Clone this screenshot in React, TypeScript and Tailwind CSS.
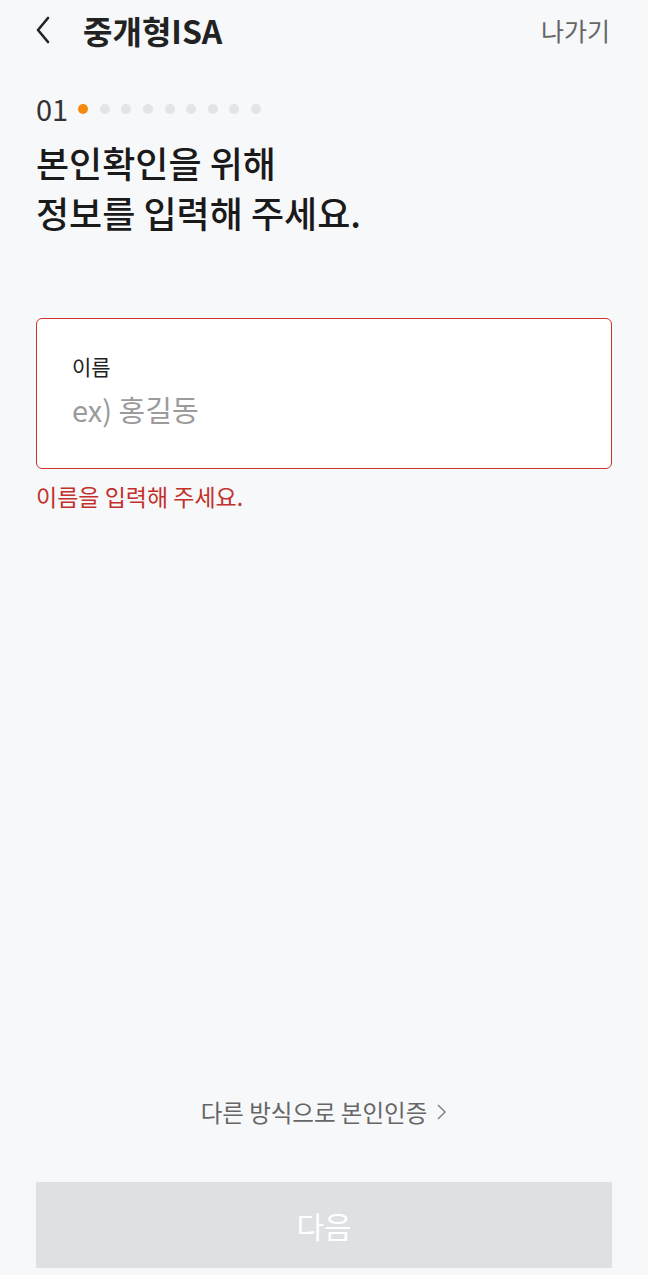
import React from 'react';

const FONT = { fontFamily: '"Noto Sans CJK KR", "Noto Sans", sans-serif' };

export default function App() {
  const dots = Array.from({ length: 9 });
  return (
    <div style={FONT} className="flex h-[1275px] w-[648px] flex-col bg-[#f7f8fa] text-[#222]">
      {/* header */}
      <div className="flex h-[60px] items-center pl-[34px] pr-[38px]">
        <svg width="18" height="30" viewBox="0 0 18 30" className="mr-[31px]">
          <path d="M14 3 L4 15 L14 27" fill="none" stroke="#222" strokeWidth="2.6" strokeLinecap="round" strokeLinejoin="round" />
        </svg>
        <h1 className="text-[32px] font-bold leading-none text-[#222]">중개형ISA</h1>
        <span className="ml-auto text-[25px] leading-none text-[#666]">나가기</span>
      </div>

      <div className="px-9">
        {/* step */}
        <div className="mt-[33px] flex h-[30px] items-center">
          <span className="text-[29px] leading-none text-[#333]">01</span>
          <div className="ml-[10px] mt-[2px] flex items-center gap-[11.6px]">
            {dots.map((_, i) => (
              <span key={i} className={`h-[10px] w-[10px] rounded-full ${i === 0 ? 'bg-[#f5890d]' : 'bg-[#e2e4e7]'}`} />
            ))}
          </div>
        </div>
        <h2 className="mt-[14px] text-[36px] font-medium leading-[50px] text-[#1a1a1a]">
          본인확인을 위해
          <br />
          정보를 입력해 주세요.
        </h2>

        {/* input */}
        <div className="mt-[81px] h-[151px] rounded-[6px] border-[1.5px] border-[#c9342f] bg-white px-[35px] pt-[34px]">
          <div className="text-[21px] leading-[26px] text-[#222]">이름</div>
          <div className="mt-[13px] text-[29px] leading-[34px] text-[#9b9b9b]">ex) 홍길동</div>
        </div>
        <p className="mt-[12px] text-[23px] leading-[30px] text-[#c4302b]">이름을 입력해 주세요.</p>
      </div>

      <div className="flex-1" />

      <div className="flex items-center justify-center pb-[55px] text-[23.5px] leading-[30px] text-[#666]">
        다른 방식으로 본인인증
        <svg width="12" height="20" viewBox="0 0 12 20" className="ml-[8px]">
          <path d="M3 3 L10 10 L3 17" fill="none" stroke="#888" strokeWidth="1.6" />
        </svg>
      </div>

      <div className="px-9 pb-[7px]">
        <button className="flex h-[86px] w-full items-center justify-center bg-[#dee1e4] text-[30px] text-white">
          다음
        </button>
      </div>
    </div>
  );
}
